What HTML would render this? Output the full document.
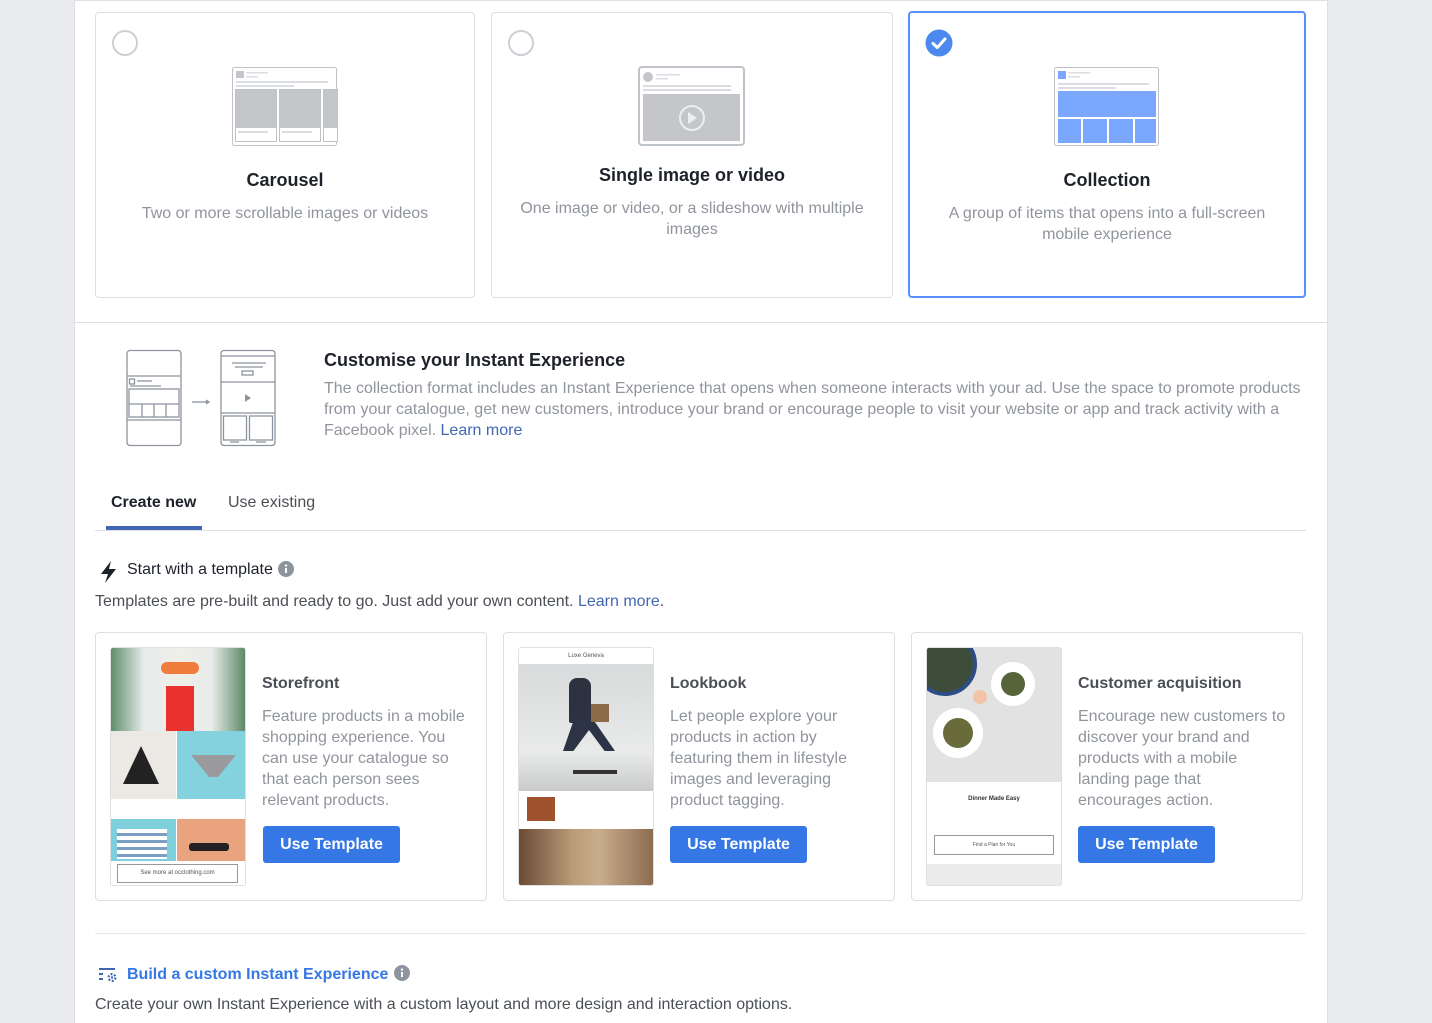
<!DOCTYPE html>
<html><head><meta charset="utf-8"><style>
*{margin:0;padding:0;box-sizing:border-box}
body{width:1432px;height:1023px;background:#e9ebee;font-family:"Liberation Sans",Arial,sans-serif;position:relative;overflow:hidden}
.a{position:absolute}
#panel{left:74px;top:0;width:1254px;height:1023px;background:#fff;border-left:1px solid #dddfe2;border-right:1px solid #dddfe2;border-top:1px solid #dddfe2}
.card{border:1px solid #dddfe2;border-radius:4px;background:#fff}
.radio{width:26px;height:26px;border:2px solid #ccd0d5;border-radius:50%}
.ct{font-size:18px;font-weight:bold;color:#1d2129;text-align:center;width:100%}
.cd{font-size:16px;color:#90949c;text-align:center;line-height:21px}
.tt{font-size:16px;font-weight:bold;color:#4b4f56}
.td{font-size:16px;color:#90949c;line-height:21px}
.btn{background:#3578e5;color:#fff;font-weight:bold;font-size:16px;border-radius:3px;width:137px;height:37px;line-height:37px;text-align:center}
.link{color:#4267b2}
.thumb{border:1px solid #dddfe2;border-radius:3px;overflow:hidden;width:136px;height:239px}
</style></head><body>
<div id="panel" class="a"></div>

<div class="a card" style="left:95px;top:12px;width:380px;height:286px"></div>
<div class="a radio" style="left:112px;top:30px"></div>
<svg class="a" style="left:232px;top:67px" width="106" height="80" viewBox="0 0 106 80">
<rect x="0.5" y="0.5" width="104" height="78" rx="2" fill="#fff" stroke="#bec2c9"/>
<rect x="4" y="4" width="8" height="7" fill="#c4c6ca"/><rect x="14" y="5" width="22" height="1.5" fill="#dadde1"/><rect x="14" y="9" width="12" height="1.5" fill="#dadde1"/>
<rect x="4" y="14" width="92" height="2" fill="#dadde1"/><rect x="4" y="18" width="58" height="2" fill="#dadde1"/>
<rect x="3.5" y="22.5" width="41" height="52" fill="#fff" stroke="#bec2c9"/><rect x="4" y="23" width="40" height="38" fill="#c4c6ca"/>
<rect x="47.5" y="22.5" width="41" height="52" fill="#fff" stroke="#bec2c9"/><rect x="48" y="23" width="40" height="38" fill="#c4c6ca"/>
<rect x="91.5" y="22.5" width="14" height="52" fill="#fff" stroke="#bec2c9"/><rect x="92" y="23" width="13" height="38" fill="#c4c6ca"/>
<rect x="6" y="64" width="30" height="2" fill="#dadde1"/><rect x="50" y="64" width="30" height="2" fill="#dadde1"/>
</svg>
<div class="a ct" style="left:95px;top:170px;width:380px">Carousel</div>
<div class="a cd" style="left:95px;top:203px;width:380px">Two or more scrollable images or videos</div>

<div class="a card" style="left:491px;top:12px;width:402px;height:286px"></div>
<div class="a radio" style="left:508px;top:30px"></div>
<svg class="a" style="left:638px;top:66px" width="108" height="81" viewBox="0 0 108 81">
<rect x="1" y="1" width="105" height="78" rx="3" fill="#fff" stroke="#bec2c9" stroke-width="2"/>
<circle cx="10" cy="11" r="5" fill="#c4c6ca"/><rect x="18" y="8" width="24" height="1.5" fill="#dadde1"/><rect x="18" y="12" width="12" height="1.5" fill="#dadde1"/>
<rect x="5" y="19" width="88" height="2" fill="#dadde1"/><rect x="5" y="23" width="88" height="2" fill="#dadde1"/>
<rect x="5" y="28" width="97" height="47" fill="#c4c6ca"/>
<circle cx="54" cy="52" r="12" fill="none" stroke="#eceef1" stroke-width="2"/><path d="M50 46 L50 58 L59 52Z" fill="#eceef1"/>
</svg>
<div class="a ct" style="left:491px;top:165px;width:402px">Single image or video</div>
<div class="a cd" style="left:511px;top:198px;width:362px">One image or video, or a slideshow with multiple images</div>

<div class="a card" style="left:908px;top:11px;width:398px;height:287px;border:2px solid #5890ff"></div>
<svg class="a" style="left:925px;top:29px" width="28" height="28" viewBox="0 0 28 28"><circle cx="14" cy="14" r="13.5" fill="#4b89ef"/><path d="M8 14.5 L12.3 18.5 L20 10" fill="none" stroke="#fff" stroke-width="3" stroke-linecap="round" stroke-linejoin="round"/></svg>
<svg class="a" style="left:1054px;top:67px" width="106" height="80" viewBox="0 0 106 80">
<rect x="0.5" y="0.5" width="104" height="78" rx="2" fill="#fff" stroke="#bec2c9"/>
<rect x="4" y="4" width="8" height="8" fill="#7ba7ff"/><rect x="14" y="5" width="22" height="1.5" fill="#dadde1"/><rect x="14" y="9" width="12" height="1.5" fill="#dadde1"/>
<rect x="4" y="16" width="91" height="2" fill="#dadde1"/><rect x="4" y="20" width="58" height="2" fill="#dadde1"/>
<rect x="4" y="24" width="98" height="26" fill="#7ba7ff"/>
<rect x="4" y="52" width="23" height="24" fill="#7ba7ff"/><rect x="29" y="52" width="24" height="24" fill="#7ba7ff"/><rect x="55" y="52" width="24" height="24" fill="#7ba7ff"/><rect x="81" y="52" width="21" height="24" fill="#7ba7ff"/>
</svg>
<div class="a ct" style="left:908px;top:170px;width:398px">Collection</div>
<div class="a cd" style="left:938px;top:203px;width:338px">A group of items that opens into a full-screen mobile experience</div>

<div class="a" style="left:74px;top:322px;width:1254px;height:1px;background:#dddfe2"></div>

<svg class="a" style="left:125px;top:349px" width="154" height="98" viewBox="0 0 154 98" fill="none" stroke="#8d949e" stroke-width="1.3">
<rect x="2" y="1.5" width="54" height="95" rx="3"/>
<line x1="2" y1="27" x2="56" y2="27"/><line x1="2" y1="71" x2="56" y2="71"/>
<rect x="4.5" y="30" width="5" height="5"/><line x1="12" y1="32" x2="27" y2="32"/><line x1="5" y1="37" x2="36" y2="37"/>
<rect x="4" y="40" width="50" height="28"/><line x1="4" y1="55" x2="54" y2="55"/><line x1="17" y1="55" x2="17" y2="68"/><line x1="29" y1="55" x2="29" y2="68"/><line x1="41" y1="55" x2="41" y2="68"/>
<line x1="67" y1="53" x2="83" y2="53"/><path d="M81 51 L84 53 L81 55" fill="#8d949e"/>
<rect x="96" y="1.5" width="54" height="95" rx="3"/>
<line x1="96" y1="7" x2="150" y2="7"/><line x1="107" y1="14" x2="141" y2="14"/><line x1="110" y1="18" x2="138" y2="18"/><rect x="117" y="22" width="11" height="4"/>
<line x1="96" y1="33" x2="150" y2="33"/><path d="M120 45 L120 53 L126 49Z" fill="#8d949e" stroke="none"/>
<line x1="96" y1="64" x2="150" y2="64"/><rect x="98.5" y="67" width="23" height="24"/><rect x="124.5" y="67" width="23" height="24"/>
<line x1="105" y1="93" x2="114" y2="93"/><line x1="131" y1="93" x2="141" y2="93"/>
</svg>
<div class="a" style="left:324px;top:350px;font-size:18px;font-weight:bold;color:#1d2129">Customise your Instant Experience</div>
<div class="a td" style="left:324px;top:378px;width:990px">The collection format includes an Instant Experience that opens when someone interacts with your ad. Use the space to promote products from your catalogue, get new customers, introduce your brand or encourage people to visit your website or app and track activity with a Facebook pixel. <span style="color:#4267b2">Learn more</span></div>

<div class="a" style="left:111px;top:494px;font-size:16px;font-weight:bold;color:#1d2129">Create new</div>
<div class="a" style="left:228px;top:494px;font-size:16px;color:#4b4f56">Use existing</div>
<div class="a" style="left:106px;top:526px;width:96px;height:4px;background:#4267b2"></div>
<div class="a" style="left:95px;top:530px;width:1211px;height:1px;background:#dddfe2"></div>

<svg class="a" style="left:99px;top:560px" width="20" height="24" viewBox="0 0 20 24"><path d="M12 1 L2 14 L9 14 L6 23 L17 9 L10 9 Z" fill="#1d2129"/></svg>
<div class="a" style="left:127px;top:561px;font-size:16px;color:#1d2129">Start with a template</div>
<svg class="a" style="left:278px;top:561px" width="16" height="16" viewBox="0 0 16 16"><circle cx="8" cy="8" r="8" fill="#8d949e"/><rect x="7" y="7" width="2" height="5" fill="#fff"/><circle cx="8" cy="4.6" r="1.2" fill="#fff"/></svg>
<div class="a" style="left:95px;top:593px;font-size:16px;color:#4b4f56">Templates are pre-built and ready to go. Just add your own content. <span class="link">Learn more</span>.</div>

<div class="a card" style="left:95px;top:632px;width:392px;height:269px"></div>
<div class="a thumb" style="left:110px;top:647px">
 <div style="height:83px;background:linear-gradient(90deg,#5f8f6e 0%,#e8ecea 25%,#f0eee9 50%,#e8ecea 75%,#5d8a68 100%);position:relative"><div style="position:absolute;left:55px;top:38px;width:28px;height:45px;background:#e8322b"></div><div style="position:absolute;left:50px;top:14px;width:38px;height:12px;background:#f07c3c;border-radius:6px"></div></div>
 <div style="display:flex;height:68px"><div style="width:66px;background:#ece9e4;position:relative"><div style="position:absolute;left:12px;top:15px;width:36px;height:38px;background:#222;clip-path:polygon(0 100%,50% 0,100% 100%)"></div></div><div style="width:1px"></div><div style="width:69px;background:#83d2de;position:relative"><div style="position:absolute;left:14px;top:24px;width:45px;height:22px;background:#9a9a9c;clip-path:polygon(0 0,100% 0,60% 100%,40% 100%)"></div></div></div>
 <div style="height:20px;background:#fff"></div>
 <div style="display:flex;height:42px"><div style="width:66px;background:#7ed0dc;position:relative"><div style="position:absolute;left:6px;top:10px;width:50px;height:30px;background:repeating-linear-gradient(180deg,#fff 0 4px,#7c9ec2 4px 7px)"></div></div><div style="width:1px"></div><div style="width:69px;background:#eaa37f;position:relative"><div style="position:absolute;left:12px;top:24px;width:40px;height:8px;background:#222;border-radius:3px"></div></div></div>
 <div style="height:26px;background:#fff;position:relative"><div style="position:absolute;left:6px;top:3px;width:121px;height:19px;border:1px solid #999;font-size:6px;color:#555;text-align:center;line-height:17px">See more at occlothing.com</div></div>
</div>
<div class="a tt" style="left:262px;top:675px">Storefront</div>
<div class="a td" style="left:262px;top:706px;width:206px">Feature products in a mobile shopping experience. You can use your catalogue so that each person sees relevant products.</div>
<div class="a btn" style="left:263px;top:826px">Use Template</div>

<div class="a card" style="left:503px;top:632px;width:392px;height:269px"></div>
<div class="a thumb" style="left:518px;top:647px">
 <div style="height:16px;background:#fff;font-size:6px;color:#555;text-align:center;line-height:16px">Luxe Geneva</div>
 <div style="height:127px;background:linear-gradient(180deg,#d8dadb,#e9eaea 70%,#c9cacb);position:relative"><div style="position:absolute;left:50px;top:14px;width:22px;height:45px;background:#2d3240;border-radius:8px 8px 2px 2px"></div><div style="position:absolute;left:44px;top:57px;width:52px;height:30px;background:#2b3344;clip-path:polygon(20% 0,60% 0,100% 100%,80% 100%,50% 30%,20% 100%,0 100%)"></div><div style="position:absolute;left:54px;top:106px;width:44px;height:4px;background:#333"></div><div style="position:absolute;left:72px;top:40px;width:18px;height:18px;background:#8c6b4a"></div></div>
 <div style="height:38px;background:#fff;position:relative"><div style="position:absolute;left:8px;top:6px;width:28px;height:24px;background:#a0522d"></div></div>
 <div style="height:58px;background:linear-gradient(90deg,#6b4a34,#b99b78 40%,#c8ad8c 60%,#8d6c50)"></div>
</div>
<div class="a tt" style="left:670px;top:675px">Lookbook</div>
<div class="a td" style="left:670px;top:706px;width:206px">Let people explore your products in action by featuring them in lifestyle images and leveraging product tagging.</div>
<div class="a btn" style="left:670px;top:826px">Use Template</div>

<div class="a card" style="left:911px;top:632px;width:392px;height:269px"></div>
<div class="a thumb" style="left:926px;top:647px">
 <div style="height:134px;background:#e2e2e2;position:relative"><div style="position:absolute;left:-14px;top:-16px;width:64px;height:64px;border-radius:50%;background:#3e4d3a;border:4px solid #2d4d86"></div><div style="position:absolute;left:64px;top:14px;width:44px;height:44px;border-radius:50%;background:#fff"></div><div style="position:absolute;left:74px;top:24px;width:24px;height:24px;border-radius:50%;background:#56643a"></div><div style="position:absolute;left:6px;top:60px;width:50px;height:50px;border-radius:50%;background:#fff"></div><div style="position:absolute;left:16px;top:70px;width:30px;height:30px;border-radius:50%;background:#6a6b3a"></div><div style="position:absolute;left:46px;top:42px;width:14px;height:14px;border-radius:50%;background:#f1c4a8"></div></div>
 <div style="height:82px;background:#fff;position:relative;text-align:center"><div style="font-size:6px;color:#333;padding-top:14px;font-weight:bold">Dinner Made Easy</div><div style="position:absolute;left:7px;top:53px;width:120px;height:20px;border:1px solid #999;font-size:5px;line-height:18px;color:#555">Find a Plan for You</div></div>
 <div style="height:23px;background:#ececec"></div>
</div>
<div class="a tt" style="left:1078px;top:675px">Customer acquisition</div>
<div class="a td" style="left:1078px;top:706px;width:210px">Encourage new customers to discover your brand and products with a mobile landing page that encourages action.</div>
<div class="a btn" style="left:1078px;top:826px">Use Template</div>

<div class="a" style="left:95px;top:933px;width:1211px;height:1px;background:#e5e6e9"></div>
<svg class="a" style="left:98px;top:966px" width="22" height="18" viewBox="0 0 22 18"><g fill="#4267b2"><rect x="1" y="2" width="16" height="2"/><rect x="1" y="7" width="4" height="2"/><rect x="1" y="12" width="4" height="2"/></g><circle cx="14" cy="11.5" r="3.4" fill="none" stroke="#4267b2" stroke-width="2.2" stroke-dasharray="2 1.6"/><circle cx="14" cy="11.5" r="1.2" fill="#4267b2"/></svg>
<div class="a" style="left:127px;top:966px;font-size:16px;font-weight:bold;color:#3578e5">Build a custom Instant Experience</div>
<svg class="a" style="left:394px;top:965px" width="16" height="16" viewBox="0 0 16 16"><circle cx="8" cy="8" r="8" fill="#8d949e"/><rect x="7" y="7" width="2" height="5" fill="#fff"/><circle cx="8" cy="4.6" r="1.2" fill="#fff"/></svg>
<div class="a" style="left:95px;top:996px;font-size:16px;color:#4b4f56">Create your own Instant Experience with a custom layout and more design and interaction options.</div>
</body></html>
